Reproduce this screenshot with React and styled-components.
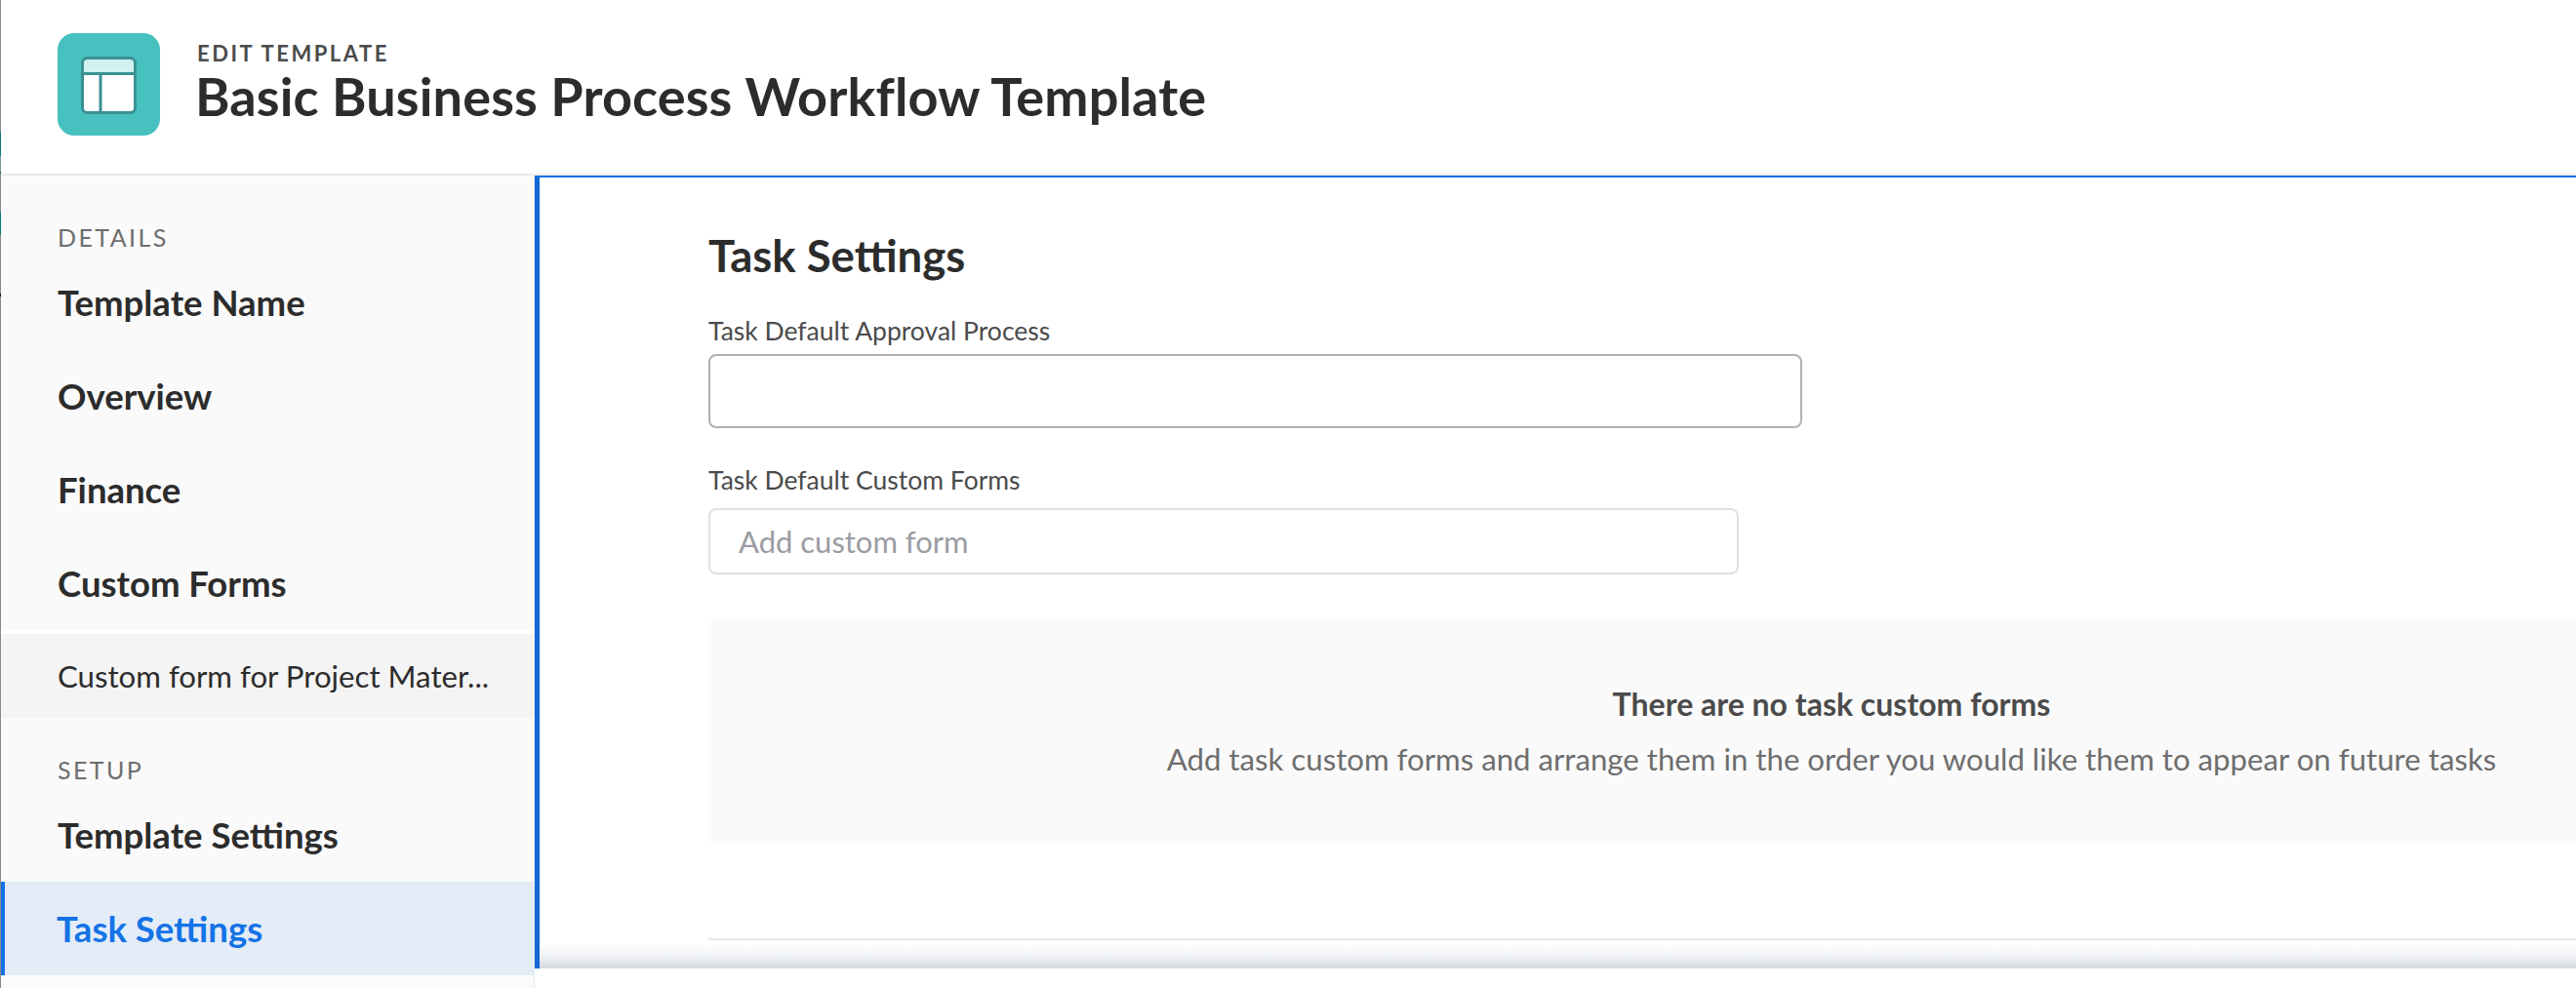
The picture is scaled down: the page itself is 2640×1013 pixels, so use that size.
import React from "react";
import styled, { createGlobalStyle } from "styled-components";

const Global = createGlobalStyle`
  html, body { margin: 0; padding: 0; background: #fff; }
  body { font-family: "Lato", "Noto Sans", sans-serif; color: #2c2c2c; }
  * { box-sizing: border-box; }
`;

const Page = styled.div`
  width: 2640px;
  height: 1013px;
  overflow: hidden;
  display: flex;
  flex-direction: column;
  padding-left: 1px;
  background-color: #fff;
  background-repeat: no-repeat;
  background-size: 1px 100%;
  background-image: linear-gradient(
    to bottom,
    #8a8a8a 135px,
    #0b7c7e 135px,
    #0b7c7e 160px,
    #7d9a9a 160px,
    #7d9a9a 176px,
    #24595c 176px,
    #24595c 178px,
    #8a8a8a 178px,
    #8a8a8a 217px,
    #0b7c7e 217px,
    #0b7c7e 241px,
    #8a8a8a 241px,
    #8a8a8a 301px,
    #111 301px,
    #111 304px,
    #8a8a8a 304px
  );
`;

const Header = styled.header`
  height: 180px;
  flex: none;
  display: flex;
  align-items: flex-start;
  padding: 34px 0 0 58px;
  gap: 36px;
  border-bottom: 2px solid #eaeaea;
`;

const TitleBlock = styled.div`
  display: flex;
  flex-direction: column;
  padding-top: 7px;
`;

const Eyebrow = styled.div`
  font-size: 22px;
  line-height: 28px;
  font-weight: 700;
  letter-spacing: 2.5px;
  color: #4b4b4b;
  margin-left: 2px;
`;

const Title = styled.h1`
  margin: -2px 0 0;
  font-size: 54px;
  line-height: 64px;
  font-weight: 700;
  letter-spacing: 0.15px;
  color: #2c2c2c;
  white-space: nowrap;
`;

const Body = styled.div`
  flex: 1;
  min-height: 0;
  display: flex;
`;

const Sidebar = styled.nav`
  width: 547px;
  flex: none;
  background: #fafafa;
  border-right: 1px solid #e8e8e8;
  display: flex;
  flex-direction: column;
  padding-top: 48px;
`;

const SectionLabel = styled.div`
  height: 30px;
  padding-left: 58px;
  font-size: 25px;
  line-height: 30px;
  letter-spacing: 2.4px;
  color: #6e6e6e;
`;

const NavItem = styled.div`
  height: 96px;
  display: flex;
  align-items: center;
  padding: ${(p) => (p.$active ? "0 0 0 53px" : "0 0 0 58px")};
  font-size: 36.5px;
  font-weight: 700;
  color: ${(p) => (p.$active ? "#1473e6" : "#2c2c2c")};
  background: ${(p) => (p.$active ? "#e3ecf7" : "transparent")};
  border-left: ${(p) => (p.$active ? "4px solid #1473e6" : "none")};
  white-space: nowrap;
`;

const NavList = styled.div`
  display: flex;
  flex-direction: column;
  margin-top: ${(p) => p.$top}px;
`;

const SubItem = styled.div`
  height: 90px;
  display: flex;
  align-items: center;
  padding-left: 58px;
  font-size: 31.2px;
  background: #f4f4f4;
  background-clip: padding-box;
  border-top: 4px solid #fff;
  color: #2c2c2c;
  white-space: nowrap;
`;

const Main = styled.main`
  position: relative;
  flex: 1;
  height: 813px;
  overflow: hidden;
  border-left: 5px solid #1268d6;
  border-top: 2px solid #1473e6;
  background: #fff;
  padding: 55px 0 0 173px;
`;

const Heading = styled.h2`
  margin: 0 0 35px;
  height: 50px;
  font-size: 45.5px;
  line-height: 50px;
  font-weight: 700;
  color: #2c2c2c;
`;

const FieldLabel = styled.div`
  font-size: 26.5px;
  line-height: 34px;
  color: #4b4b4b;
`;

const ApprovalInput = styled.div`
  width: 1121px;
  height: 76px;
  margin: 7px 0 36px;
  background: #fff;
  border: 2px solid #b0b0b0;
  border-radius: 8px;
`;

const FormInput = styled.div`
  width: 1056px;
  height: 68px;
  margin-top: 12px;
  padding-left: 29px;
  display: flex;
  align-items: center;
  font-size: 31px;
  line-height: 62px;
  color: #9a9ca3;
  background: #fff;
  border: 2px solid #e1e1e1;
  border-radius: 8px;
`;

const EmptyBox = styled.section`
  width: 2302px;
  height: 230px;
  margin-top: 46px;
  background: #fafafa;
  border-radius: 8px;
  display: flex;
  flex-direction: column;
  align-items: center;
  padding-top: 66px;
`;

const EmptyTitle = styled.div`
  font-size: 32px;
  line-height: 42px;
  font-weight: 700;
  color: #4b4b4b;
  white-space: nowrap;
`;

const EmptyText = styled.div`
  margin-top: 14px;
  font-size: 31.2px;
  line-height: 42px;
  color: #6e6e6e;
  white-space: nowrap;
`;

const Divider = styled.hr`
  margin: 97px 0 0;
  border: none;
  height: 2px;
  background: #e8e8e8;
`;

const BottomShadow = styled.div`
  position: absolute;
  left: 0;
  right: 0;
  bottom: 0;
  height: 26px;
  background: linear-gradient(
    to bottom,
    rgba(213, 218, 224, 0),
    rgba(213, 218, 224, 0.35) 50%,
    #d5dae0
  );
`;

const TemplateIcon = () => (
  <svg width="105" height="105" viewBox="0 0 105 105" style={{ flex: "none" }}>
    <rect width="105" height="105" rx="17" fill="#47c1bf" />
    <rect x="25.5" y="25.5" width="54" height="56" rx="5" fill="#fff" />
    <path d="M25.5 41V30.5a5 5 0 0 1 5-5h44a5 5 0 0 1 5 5V41z" fill="#d0f1ef" />
    <rect x="25.5" y="25.5" width="54" height="56" rx="5" fill="none" stroke="#3b9193" strokeWidth="3" />
    <path d="M25.5 41.5h54M44 41.5v40" fill="none" stroke="#3b9193" strokeWidth="3" />
  </svg>
);

export default function App() {
  return (
    <>
      <Global />
      <Page>
        <Header>
          <TemplateIcon />
          <TitleBlock>
            <Eyebrow>EDIT TEMPLATE</Eyebrow>
            <Title>Basic Business Process Workflow Template</Title>
          </TitleBlock>
        </Header>
        <Body>
          <Sidebar>
            <SectionLabel>DETAILS</SectionLabel>
            <NavList $top={4}>
              <NavItem>Template Name</NavItem>
              <NavItem>Overview</NavItem>
              <NavItem>Finance</NavItem>
              <NavItem>Custom Forms</NavItem>
            </NavList>
            <SubItem>Custom form for Project Mater...</SubItem>
            <NavList $top={38}>
              <SectionLabel>SETUP</SectionLabel>
            </NavList>
            <NavList $top={4}>
              <NavItem>Template Settings</NavItem>
              <NavItem $active>Task Settings</NavItem>
            </NavList>
          </Sidebar>
          <Main>
            <Heading>Task Settings</Heading>
            <FieldLabel>Task Default Approval Process</FieldLabel>
            <ApprovalInput />
            <FieldLabel>Task Default Custom Forms</FieldLabel>
            <FormInput>Add custom form</FormInput>
            <EmptyBox>
              <EmptyTitle>There are no task custom forms</EmptyTitle>
              <EmptyText>Add task custom forms and arrange them in the order you would like them to appear on future tasks</EmptyText>
            </EmptyBox>
            <Divider />
            <BottomShadow />
          </Main>
        </Body>
      </Page>
    </>
  );
}
